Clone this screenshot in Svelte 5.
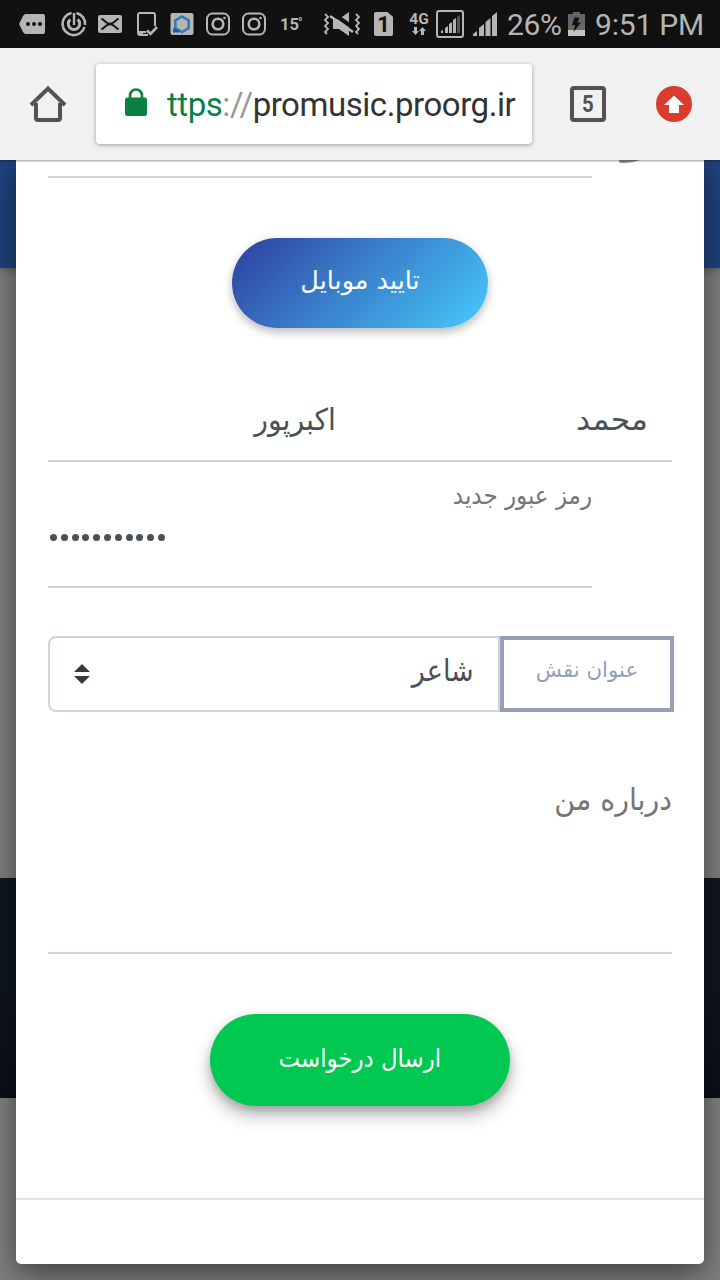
<script lang="ts">
    const url = { scheme: 'ttps', separator: '://', host: 'promusic.proorg.ir' };
    const openTabs = 5;

    const firstName = 'محمد';
    const lastName = 'اکبرپور';
    const role = 'شاعر';
    const passwordDots = Array.from({ length: 11 });
</script>

<div class="screen">
    <header class="status">
        <div class="status__notifications">
            <svg class="status__first" width="32" height="48" viewBox="0 0 32 48">
                <path d="M10 14h17a2 2 0 0 1 2 2v16a2 2 0 0 1-2 2H10q-2 0-3-2l-3.500-7q-.5-1 0-2l3.500-7q1-2 3-2z" fill="#b5b5b5" />
                <g fill="#111"><circle cx="12" cy="24" r="2" /><circle cx="18" cy="24" r="2" /><circle cx="24" cy="24" r="2" /></g>
            </svg>
            <svg width="36" height="48" viewBox="0 0 36 48" fill="none" stroke="#b5b5b5">
                <path d="M15.500 12.900A11.200 11.200 0 1 0 28.500 27M20.500 12.900A11.200 11.200 0 0 1 29 25" stroke-width="2.600" />
                <path d="M14.300 19.500a5.700 5.700 0 1 0 7.400 0" stroke-width="3" />
                <path d="M18 13v12" stroke-width="2.400" />
            </svg>
            <svg width="36" height="48" viewBox="0 0 36 48">
                <rect x="6" y="15" width="24" height="18" rx="2" fill="#b5b5b5" />
                <path d="M9.500 18.500l5 4q3.500 2.500 7 0l5-4M9.500 29.500l5-4q3.500-2.500 7 0l5 4" fill="none" stroke="#111" stroke-width="2" />
            </svg>
            <svg width="36" height="48" viewBox="0 0 36 48" fill="none" stroke="#b5b5b5" stroke-width="2">
                <path d="M27 26V15q0-2-2-2H12q-2 0-2 2v18q0 2 2 2h8" />
                <path d="M11 31h7v2h-3v2h-4z" fill="#b5b5b5" stroke="none" />
                <path d="M19 30.500l3.500 3.500 6.500-7" stroke-width="2.600" />
            </svg>
            <svg width="36" height="48" viewBox="0 0 36 48">
                <rect x="6.500" y="13" width="23" height="22" rx="2" fill="#b5b5b5" />
                <path d="M18 16.500l6.700 4v7.500L18 32l-6.700-4v-7.500z" fill="none" stroke="#347ab9" stroke-width="2.600" />
                <path d="M10 27.500l6 3.500-1 1.500h-6v-3z" fill="#245c96" />
            </svg>
            {#each [0, 1] as camera (camera)}
                <svg width="36" height="48" viewBox="0 0 36 48" fill="none" stroke="#b5b5b5" stroke-width="2">
                    <rect x="7" y="13.500" width="22" height="21" rx="5.500" />
                    <circle cx="18" cy="24" r="5.300" stroke-width="2.600" />
                    <circle cx="24.500" cy="18" r="1.300" fill="#b5b5b5" stroke="none" />
                </svg>
            {/each}
            <span class="status__temperature">15<sup>°</sup></span>
        </div>

        <div class="status__system">
            <svg width="38" height="48" viewBox="0 0 38 48">
                <path d="M2 14l3 3-3 3 3 3-3 3 3 3-3 3 2 2M33 14l3 3-3 3 3 3-3 3 3 3-3 3 2 2" fill="none" stroke="#b5b5b5" stroke-width="1.800" />
                <path d="M10 19h6l10-7v24l-10-7h-6z" fill="#b5b5b5" />
                <path d="M10 13.500l22 15.500" stroke="#111" stroke-width="4" />
                <path d="M7 16l23 16" stroke="#b5b5b5" stroke-width="2.600" />
            </svg>
            <span class="status__sim">1</span>
            <span class="status__network">
                4G
                <svg width="14" height="8" viewBox="0 0 14 8" fill="#b5b5b5">
                    <path d="M2 0h3v4h2L3.500 8 0 4h2zM9 8h3V4h2l-3.500-4L7 4h2z" />
                </svg>
            </span>
            <svg width="30" height="48" viewBox="0 0 30 48">
                <rect x="2" y="11" width="26" height="26" rx="2" fill="none" stroke="#b5b5b5" stroke-width="2" />
                <path d="M6 33v-2l2-1v3zM10 33v-5l3-2v7zM14 33v-9l3-2v11zM18 33V20l3-2v15z" fill="#b5b5b5" />
                <path d="M22 33V17l3-2v18z" fill="#555" />
            </svg>
            <svg class="status__signal" width="27" height="48" viewBox="0 0 27 48" fill="#b5b5b5">
                <path d="M1 36v-2l4-3v5zM7 36v-8l5-4v12zM13.500 36V22l5-4v18zM20 36V16l5-4v24z" />
            </svg>
            <span class="status__battery">26%</span>
            <svg width="17" height="48" viewBox="0 0 17 48">
                <path d="M0 14h5v-2h7v2h5v22H0z" fill="#666" />
                <path d="M0 30h17v6H0z" fill="#c4c4c4" />
                <path d="M6.500 17.500h5l-2 5H13L5.500 32l1.500-7H4z" fill="#111" />
            </svg>
            <span class="status__time">9:51 PM</span>
        </div>
    </header>

    <nav class="toolbar">
        <svg class="toolbar__home" width="38" height="38" viewBox="0 0 38 38">
            <path d="M2 20L19 3.500 36 20M7 18v15q0 2 2 2h20q2 0 2-2V18" fill="none" stroke="#535353" stroke-width="4" />
        </svg>
        <div class="address">
            <svg width="24" height="30" viewBox="0 0 24 30">
                <path d="M6 12V8.500a6 6 0 0 1 12 0V12" fill="none" stroke="#0b8043" stroke-width="2.600" />
                <rect x="1" y="10.500" width="22" height="18.500" rx="2.500" fill="#0b8043" />
            </svg>
            <span class="address__url"><span class="address__scheme">{url.scheme}</span><span class="address__separator">{url.separator}</span>{url.host}</span>
        </div>
        <span class="toolbar__tabs"><span>{openTabs}</span></span>
        <svg class="toolbar__update" width="36" height="36" viewBox="0 0 36 36">
            <circle cx="18" cy="18" r="18" fill="#d93b2f" />
            <path d="M18 9.500l10 9.500h-5v8H13v-8H8z" fill="#fff" />
        </svg>
    </nav>

    <main class="page">
        <div class="backdrop">
            <div class="backdrop__header"></div>
            <div class="backdrop__content"></div>
            <div class="backdrop__footer"></div>
        </div>

        <form class="modal" dir="rtl">
            <div class="field field_mobile">
                <svg width="24" height="4" viewBox="0 0 24 4"><path d="M1 0h21q-7 3-18 3-2 0-3-1z" fill="#8b8b8b" /></svg>
            </div>
            <button class="button button_confirm" type="button"><span>تایید موبایل</span></button>

            <div class="names">
                <span class="names__first">{firstName}</span>
                <span class="names__last">{lastName}</span>
            </div>

            <div class="field field_password">
                <span class="field__label">رمز عبور جدید</span>
                <div class="dots">
                    {#each passwordDots as _, index (index)}
                        <i></i>
                    {/each}
                </div>
            </div>

            <div class="role">
                <span class="role__title"><span>عنوان نقش</span></span>
                <div class="role__select">
                    <span>{role}</span>
                    <svg width="16" height="20" viewBox="0 0 16 20" fill="#343a40"><path d="M0 8l8-8 8 8zM0 12h16l-8 8z" /></svg>
                </div>
            </div>

            <div class="about"><span>درباره من</span></div>
            <button class="button button_send" type="button"><span>ارسال درخواست</span></button>
            <footer class="modal__footer"></footer>
        </form>
    </main>
</div>

<style>
    :global(body) {
        background: #808080;
    }

    .screen {
        display: flex;
        flex-direction: column;
        width: 720px;
        height: 1280px;
        overflow: hidden;
        font-family: Roboto, "DejaVu Sans", sans-serif;
    }

    .status {
        display: flex;
        flex: 0 0 48px;
        justify-content: space-between;
        background: #111;
        color: #b5b5b5;
    }

    .status__notifications,
    .status__system {
        display: flex;
        align-items: center;
        height: 48px;
    }

    .status__first {
        margin: 0 8px 0 16px;
    }

    .status__temperature {
        width: 36px;
        padding-left: 8px;
        box-sizing: border-box;
        font-size: 16.500px;
        font-weight: 700;
        white-space: nowrap;
    }

    .status__temperature sup {
        margin-left: -1px;
        font-size: 12px;
        line-height: 0;
        vertical-align: 3px;
    }

    .status__system {
        padding-right: 16px;
    }

    .status__sim {
        width: 19px;
        height: 24px;
        margin: 0 15px 0 13px;
        border-radius: 2px;
        background: #b5b5b5;
        clip-path: polygon(0 0, 70% 0, 100% 20%, 100% 100%, 0 100%);
        color: #111;
        font-size: 22px;
        font-weight: 700;
        line-height: 25px;
        text-align: center;
    }

    .status__network {
        display: flex;
        flex-direction: column;
        align-items: center;
        width: 20px;
        margin: -2px 6px 0 1px;
        font-size: 15.500px;
        font-weight: 700;
        line-height: 15px;
    }

    .status__signal {
        margin-left: 7px;
    }

    .status__battery {
        width: 55px;
        margin: 0 6px 0 8px;
        font-size: 30px;
        letter-spacing: -.4px;
    }

    .status__time {
        width: 109px;
        margin: 0 0 0 10px;
        font-size: 30px;
        letter-spacing: -.2px;
        white-space: nowrap;
    }

    .toolbar {
        z-index: 1;
        display: flex;
        flex: 0 0 112px;
        box-sizing: border-box;
        align-items: center;
        padding: 0 28px 0 29px;
        background: #f1f1f1;
        box-shadow: 0 1px 2px rgba(0, 0, 0, .4);
    }

    .address {
        display: flex;
        align-items: center;
        box-sizing: border-box;
        width: 436px;
        height: 80px;
        margin: 0 38px 0 29px;
        padding: 0 16px 0 28px;
        border-radius: 4px;
        background: #fff;
        box-shadow: 0 1px 4px rgba(0, 0, 0, .35);
    }

    .address svg {
        flex: none;
        margin-top: -5px;
    }

    .address__url {
        margin-left: 19px;
        color: #333;
        font-size: 33px;
        letter-spacing: -.45px;
        white-space: nowrap;
    }

    .address__scheme {
        color: #0b8043;
    }

    .address__separator {
        color: #999;
    }

    .toolbar__tabs {
        box-sizing: border-box;
        width: 36px;
        height: 36px;
        margin-right: 50px;
        border: 4px solid #535353;
        border-radius: 4px;
        color: #535353;
        font-size: 24px;
        font-weight: 700;
        line-height: 29px;
        text-align: center;
    }

    .toolbar__tabs span {
        display: inline-block;
        transform: scaleX(.85);
    }

    /* the backdrop and the modal share one grid cell */
    .page {
        display: grid;
        flex: 1;
        grid-template: 1120px / 720px;
    }

    .backdrop,
    .modal {
        grid-area: 1 / 1;
    }

    .backdrop {
        display: flex;
        flex-direction: column;
        background: #808080;
    }

    .backdrop__header {
        z-index: 0;
        flex: 0 0 108px;
        background: #20427e;
        box-shadow: 0 2px 8px rgba(0, 0, 0, .3);
    }

    .backdrop__content {
        flex: 0 0 610px;
    }

    .backdrop__footer {
        flex: 0 0 220px;
        background: linear-gradient(#10161f 52%, #0b0e18);
    }

    .modal {
        display: flex;
        z-index: 0;
        flex-direction: column;
        margin: 0 16px 16px;
        padding: 0 32px;
        border-radius: 0 0 5px 5px;
        background: #fff;
        box-shadow: 0 10px 30px rgba(0, 0, 0, .5);
        color: #495057;
        font-family: "DejaVu Sans", sans-serif;
        font-size: 30px;
    }

    .modal span {
        white-space: nowrap;
    }

    .field {
        box-sizing: border-box;
        width: 544px;
        margin-right: 80px;
        border-bottom: 2px solid #ced4da;
    }

    .field_mobile {
        height: 18px;
    }

    .field_mobile svg {
        display: block;
        margin-right: -50px;
    }

    .button {
        align-self: center;
        padding: 0;
        border: 0;
        border-radius: 46px;
        color: #fff;
        font-family: inherit;
    }

    .button_confirm {
        width: 256px;
        height: 90px;
        margin-top: 60px;
        padding-bottom: 6px;
        background: linear-gradient(135deg, #303f9f, #45cafc);
        box-shadow: 0 4px 10px rgba(0, 0, 0, .28);
        font-size: 25.500px;
    }

    .names {
        display: grid;
        box-sizing: border-box;
        grid-template-columns: 1fr 1fr;
        height: 74px;
        margin-top: 60px;
        padding-top: 14px;
        border-bottom: 2px solid #ced4da;
        line-height: 36px;
    }

    .names span {
        margin-right: 24px;
        transform-origin: right;
    }

    .names__first {
        transform: scaleX(1.050);
    }

    .names__last {
        transform: scaleX(.945);
    }

    .field_password {
        height: 126px;
        padding-top: 18px;
    }

    .field__label {
        display: block;
        color: #757575;
        font-size: 25px;
        line-height: 32px;
        transform: scaleX(.92);
        transform-origin: right;
    }

    .dots {
        display: flex;
        direction: ltr;
        gap: 3.800px;
        margin: 22px 0 0 2px;
    }

    .dots i {
        width: 7px;
        height: 7px;
        border-radius: 50%;
        background: #495057;
    }

    .role {
        display: flex;
        height: 76px;
        margin: 48px -2px 0 0;
    }

    .role__title {
        display: flex;
        box-sizing: border-box;
        width: 174px;
        align-items: center;
        justify-content: center;
        padding-bottom: 10px;
        border: 4px solid #969fb5;
        color: #969fb5;
        font-size: 21.300px;
    }

    .role__select {
        display: flex;
        box-sizing: border-box;
        width: 452px;
        align-items: center;
        justify-content: space-between;
        padding: 0 24px;
        border: 2px solid #ced4da;
        border-radius: 8px 0 0 8px;
    }

    .role__select span {
        margin-top: -8px;
        transform: scaleX(.9);
        transform-origin: right;
    }

    .about {
        box-sizing: border-box;
        height: 182px;
        margin-top: 60px;
        padding-top: 10px;
        border-bottom: 2px solid #ced4da;
        color: #757575;
        line-height: 36px;
    }

    .about span {
        display: inline-block;
        transform: scaleX(.95);
        transform-origin: right;
    }

    .button_send {
        width: 300px;
        height: 92px;
        margin-top: 60px;
        padding-bottom: 4px;
        background: #00c851;
        box-shadow: 0 10px 18px rgba(0, 0, 0, .25), 0 4px 8px rgba(0, 0, 0, .18);
        font-size: 25px;
    }

    .button_send span {
        display: inline-block;
        transform: scaleX(.915);
    }

    .modal__footer {
        margin: 92px -32px 0;
        border-top: 2px solid #dee2e6;
    }
</style>
